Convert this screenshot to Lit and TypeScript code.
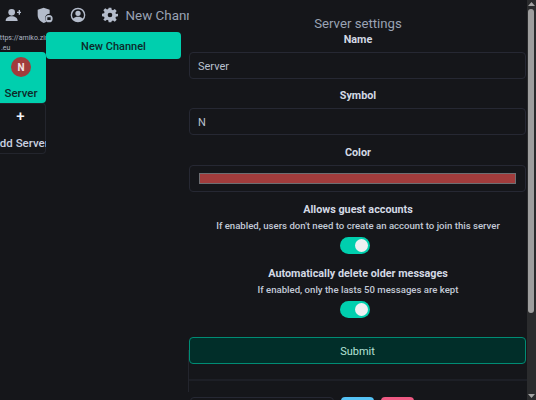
import { LitElement, html, css } from 'lit';
import { customElement } from 'lit/decorators.js';

@customElement('app-root')
export class AppRoot extends LitElement {
    static styles = css`
        :host {
            display: flex;
            position: relative;
            width: 536px;
            height: 400px;
            overflow: hidden;
            background: #15161a;
            color: #c9d1e0;
            font-family: Roboto, "Noto Sans", sans-serif;
        }
        .left { width: 189px; flex: none; display: flex; flex-direction: column; overflow: hidden; }
        .toolbar {
            height: 30px;
            margin-bottom: 2px;
            flex: none;
            display: flex;
            align-items: center;
            gap: 16.5px;
            padding-left: 4.5px;
            white-space: nowrap;
            color: #b4bccb;
        }
        .toolbar svg { width: 16px; height: 16px; flex: none; fill: currentColor; }
        .toolbar .title { font-size: 13.4px; color: #9aa3b4; margin: 1px 0 0 -9px; }
        .cols { display: flex; flex: 1; }
        .servers { width: 46px; flex: none; overflow: hidden; }
        .url { font-size: 7px; line-height: 10px; color: #aeb6c4; white-space: nowrap; text-indent: -5px; padding: 1px 0 0 1px; height: 19px; }
        .server {
            height: 51px;
            box-sizing: border-box;
            border-radius: 0 4px 4px 0;
            display: flex;
            flex-direction: column;
            align-items: center;
            gap: 10px;
            padding: 5px 4px 0 0;
            font-size: 11.5px;
            font-weight: 500;
            line-height: 13px;
            white-space: nowrap;
        }
        .server.active { background: #00cfae; color: #0d2a2a; }
        .server.add { border: 1px solid #23252d; border-left: none; color: #c9d1e0; padding-top: 2px; gap: 11px; }
        .avatar {
            width: 20px;
            height: 20px;
            flex: none;
            border-radius: 50%;
            background: #a23c3c;
            color: #f3e4e4;
            font-size: 10px;
            font-weight: 700;
            display: flex;
            align-items: center;
            justify-content: center;
        }
        .plus { height: 20px; flex: none; font-size: 15px; line-height: 20px; color: #f2f4f8; }
        .channels { width: 135px; flex: none; }
        .channel {
            height: 27px;
            box-sizing: border-box;
            padding-top: 1px;
            border-radius: 4px;
            background: #00cfae;
            color: #0d2a2a;
            font-size: 11px;
            font-weight: 500;
            display: flex;
            align-items: center;
            justify-content: center;
        }
        .panel { flex: 1; overflow: hidden; padding-top: 14px; min-width: 0; }
        .heading { font-size: 13.2px; line-height: 19px; color: #9aa3b4; text-align: center; }
        .label { font-size: 10.8px; font-weight: 700; line-height: 14px; color: #d3d9e4; text-align: center; }
        .field {
            height: 27px;
            box-sizing: border-box;
            border: 1px solid #262833;
            border-radius: 4px;
            display: flex;
            align-items: center;
            padding: 1px 9px 0 8px;
            font-size: 11px;
            color: #b9c1cf;
            margin: 5px 1px 0 0;
        }
        .group + .group { margin-top: 10.25px; }
        .swatch { flex: 1; height: 11px; margin-left: 1px; background: #a23c3c; border: 1px solid #6e6e72; box-sizing: border-box; }
        .option { text-align: center; margin-top: 11.5px; }
        .option + .option { margin-top: 13px; }
        .option .hint { font-size: 9.6px; font-weight: 500; line-height: 14px; margin-top: 1.5px; color: #c3cad7; }
        .toggle {
            width: 30px;
            height: 17px;
            border-radius: 9px;
            background: #00cfae;
            margin: 4.5px 0 0 151px;
            display: flex;
            align-items: center;
            justify-content: flex-end;
            padding-right: 2px;
            box-sizing: border-box;
        }
        .toggle i { width: 13px; height: 13px; border-radius: 50%; background: #eef0f2; display: block; }
        .submit {
            height: 27px;
            box-sizing: border-box;
            padding-top: 1px;
            border: 1px solid #008c74;
            border-radius: 4px;
            background: #012e29;
            color: #b5e3d8;
            font-size: 11px;
            display: flex;
            align-items: center;
            justify-content: center;
            margin: 19px 1px 0 0;
        }
        .rule { height: 2px; background: #1d1f26; margin-top: 15px; }
        .footer { display: flex; margin-top: 16px; padding-left: 1px; }
        .footer div { height: 12px; border-radius: 4px; }
        .footer .box { width: 144px; border: 1px solid #262833; margin-right: 7px; box-sizing: border-box; }
        .footer .blue { width: 33px; background: #55c2f5; margin-right: 7px; }
        .footer .pink { width: 33px; background: #ee5a83; }
        .seam { position: absolute; left: 188px; top: 350px; width: 1px; height: 42px; background: #23252d; }
        .scrollbar {
            width: 9px;
            flex: none;
            background: #2a2b2d;
            display: flex;
            flex-direction: column;
            align-items: center;
        }
        .arrow { width: 9px; height: 9px; flex: none; fill: #a3a3a3; }
        .track { flex: 1; width: 100%; }
        .thumb { width: 6px; height: 304px; margin-left: 1px; border-radius: 3px; background: #9e9e9e; }
    `;

    render() {
        return html`
            <div class="left">
                <div class="toolbar">
                    <svg viewBox="0 0 24 24"><circle cx="10" cy="8" r="5"/><path d="M1 21c0-4.500 4-7 9-7s9 2.500 9 7zM18 7h2.500V4.500h2V7H25v2h-2.500v2.500h-2V9H18z"/></svg>
                    <svg viewBox="0 0 24 24"><path d="M10 1l9 3v6c-4 0-7 3-7 7 0 2 .8 3.500 2 5-1.200.7-2.500 1.300-4 2-5.500-2.300-9-6.500-9-12V4z"/><path fill-rule="evenodd" d="M18 12a5.500 5.500 0 1 0 0 11 5.500 5.500 0 0 0 0-11zm-2.500 3.500h5v4h-5z"/></svg>
                    <svg viewBox="0 0 24 24"><path fill-rule="evenodd" d="M12 1a11 11 0 1 0 0 22 11 11 0 0 0 0-22zm0 2.200a8.800 8.800 0 0 1 7 14.100c-1.500-1.800-4-2.800-7-2.800s-5.500 1-7 2.800A8.800 8.800 0 0 1 12 3.200zM12 5.500a4 4 0 1 0 0 8 4 4 0 0 0 0-8z"/></svg>
                    <svg viewBox="0 0 24 24"><path fill-rule="evenodd" d="M10 1h4l.6 3.200 1.900.8 2.700-1.900 2.800 2.800-1.900 2.700.8 1.900L24 10v4l-3.100.6-.8 1.900 1.900 2.700-2.800 2.800-2.700-1.900-1.900.8L14 23h-4l-.6-3.100-1.900-.8-2.700 1.900L2 19.200l1.900-2.700-.8-1.900L0 14v-4l3.100-.6.800-1.900L2 4.800 4.800 2l2.700 1.900 1.900-.8zM12 8.500a3.500 3.500 0 1 0 0 7 3.500 3.500 0 0 0 0-7z"/></svg>
                    <span class="title">New Channel</span>
                </div>
                <div class="cols">
                    <div class="servers">
                        <div class="url">https://amiko.zirc<br />.eu</div>
                        <div class="server active"><span class="avatar">N</span>Server</div>
                        <div class="server add"><span class="plus">+</span>Add Server</div>
                    </div>
                    <div class="channels"><div class="channel">New Channel</div></div>
                </div>
            </div>
            <div class="panel">
                <div class="heading">Server settings</div>
                <div class="group"><div class="label">Name</div><div class="field">Server</div></div>
                <div class="group"><div class="label">Symbol</div><div class="field">N</div></div>
                <div class="group"><div class="label">Color</div><div class="field"><span class="swatch"></span></div></div>
                <div class="option">
                    <div class="label">Allows guest accounts</div>
                    <div class="hint">If enabled, users don't need to create an account to join this server</div>
                    <div class="toggle"><i></i></div>
                </div>
                <div class="option">
                    <div class="label">Automatically delete older messages</div>
                    <div class="hint">If enabled, only the lasts 50 messages are kept</div>
                    <div class="toggle"><i></i></div>
                </div>
                <div class="submit">Submit</div>
                <div class="rule"></div>
                <div class="footer"><div class="box"></div><div class="blue"></div><div class="pink"></div></div>
            </div>
            <div class="seam"></div>
            <div class="scrollbar">
                <svg class="arrow" viewBox="0 0 9 9"><path d="M4.500 2L8 6H1z"/></svg>
                <div class="track"><div class="thumb"></div></div>
                <svg class="arrow" viewBox="0 0 9 9"><path d="M4.500 7L1 3h7z"/></svg>
            </div>
        `;
    }
}
